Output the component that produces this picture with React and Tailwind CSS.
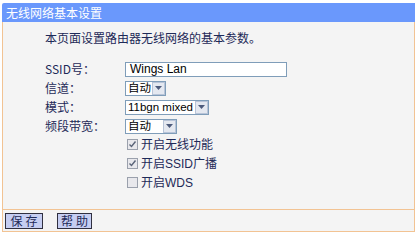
import React from 'react';

const font = { fontFamily: '"Noto Sans CJK SC", "Liberation Sans", sans-serif' };
const latinFont = { fontFamily: '"Liberation Sans", "Noto Sans CJK SC", sans-serif' };

function SelectBox({ value, width }) {
  return (
    <div className={`flex items-center h-[15px] bg-white border border-[#7f9db9] ${width}`}>
      <span className="flex-1 pl-[2px] text-[11.5px] leading-[13px] text-black whitespace-nowrap" style={latinFont}>
        {value}
      </span>
      <span className="w-[13px] h-[13px] shrink-0 bg-[#e4e8f0] border border-[#b8c4d8] flex items-center justify-center">
        <svg width="7" height="4" viewBox="0 0 7 4">
          <path d="M0 0 L7 0 L3.5 4 Z" fill="#4d5b7c" />
        </svg>
      </span>
    </div>
  );
}

function Check({ checked, label }) {
  return (
    <div className="flex items-center h-[19px] pl-[2px]">
      <span className="w-[11px] h-[11px] border border-[#9aa0ac] bg-[#e8e8ec] flex items-center justify-center">
        {checked && (
          <svg width="9" height="9" viewBox="0 0 9 9">
            <path d="M1.5 4.5 L3.5 6.5 L7.5 1.5" stroke="#5a6478" strokeWidth="1.4" fill="none" />
          </svg>
        )}
      </span>
      <span className="ml-[3px] text-[12px] text-[#1e2a58]" style={latinFont}>{label}</span>
    </div>
  );
}

function Row({ label, children }) {
  return (
    <div className="flex items-center h-[18px]">
      <span className="w-[80px] text-[12px] text-[#1e2a58]" style={font}>{label}</span>
      {children}
    </div>
  );
}

export default function App() {
  return (
    <div className="w-[420px] h-[236px] bg-white pt-[3px] pl-[2px]" style={font}>
      <div className="w-[413px]">
        {/* Header */}
        <div className="h-[19px] bg-[#6a98fc] rounded-tl-[2px] flex items-center pl-[4px]">
          <span className="text-[12px] text-white" style={font}>无线网络基本设置</span>
        </div>

        {/* Body */}
        <div className="h-[187px] bg-[#f4f4f4] border-l border-r border-[#f2c393] pl-[42px] pt-[8px]">
          <div className="text-[12px] leading-[16px] text-[#1e2a58]">本页面设置路由器无线网络的基本参数。</div>

          <div className="mt-[14px] flex flex-col gap-[1px]">
            <Row label="SSID号：">
              <div className="w-[162px] h-[15px] bg-white border border-[#7f9db9] flex items-center pl-[4px] text-[12px] text-black" style={latinFont}>
                Wings Lan
              </div>
            </Row>
            <Row label="信道：">
              <SelectBox value="自动" width="w-[41px]" />
            </Row>
            <Row label="模式：">
              <SelectBox value="11bgn mixed" width="w-[84px]" />
            </Row>
            <Row label="频段带宽：">
              <SelectBox value="自动" width="w-[52px]" />
            </Row>
          </div>

          <div className="pl-[80px] flex flex-col">
            <Check checked label="开启无线功能" />
            <Check checked label="开启SSID广播" />
            <Check checked={false} label="开启WDS" />
          </div>
        </div>

        {/* Footer */}
        <div className="h-[23px] bg-[#f4f4f4] border border-[#f2c393] flex items-center pl-[2px] gap-[14px]">
          <button className="w-[38px] h-[16px] bg-[#c6cef2] border border-[#303040] text-[12px] leading-[14px] tracking-[3px] text-[#1e2a58] pl-[3px]" style={font}>保存</button>
          <button className="w-[35px] h-[16px] bg-[#c6cef2] border border-[#303040] text-[12px] leading-[14px] tracking-[3px] text-[#1e2a58] pl-[3px]" style={font}>帮助</button>
        </div>
      </div>
    </div>
  );
}
